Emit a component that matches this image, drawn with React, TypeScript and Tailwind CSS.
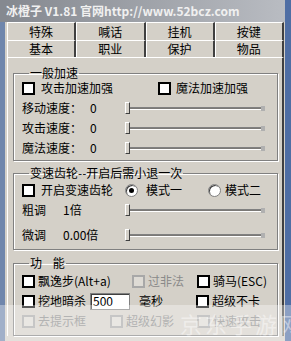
import React from "react";

const F = '"Noto Sans CJK SC", "Noto Sans", sans-serif';

function Box({ disabled = false }: { disabled?: boolean }) {
  return (
    <span
      className={
        "inline-block w-[13px] h-[13px] shrink-0 " +
        (disabled
          ? "border-2 border-[#a8a8a8] bg-[#dedbd5]"
          : "border-2 border-black bg-white")
      }
    />
  );
}

function Radio({ on = false }: { on?: boolean }) {
  return (
    <span className="relative inline-flex w-[13px] h-[13px] shrink-0 rounded-full bg-white border border-[#808080] shadow-[inset_1px_1px_0_#404040] items-center justify-center">
      {on && <span className="w-[5px] h-[5px] rounded-full bg-black" />}
    </span>
  );
}

function Slider() {
  return (
    <div className="relative w-[140px] h-[12px]">
      <div className="absolute left-0 right-0 top-[5px] h-[3px] border-t border-[#808080] border-b border-b-white bg-[#404040]/60" />
      <div className="absolute left-0 top-0 w-[5px] h-[12px] bg-[#d4d0c8] border-l border-t border-white border-r border-b border-r-[#404040] border-b-[#404040]" />
      <div className="absolute right-0 top-[4px] w-[4px] h-[5px] bg-[#b0b0b0]" />
    </div>
  );
}

function Tab({ label }: { label: string }) {
  return (
    <div className="flex-1 flex items-center justify-center border-t border-l border-t-white border-l-white border-r-2 border-r-[#404040] text-[12px] leading-none">
      {label}
    </div>
  );
}

function Group({ title, children, cls }: { title: string; children: React.ReactNode; cls: string }) {
  return (
    <fieldset className={"w-[265px] border border-[#808080] shadow-[1px_1px_0_#fff,inset_1px_1px_0_#fff] pl-[8px] pr-[4px] " + cls}>
      <legend className="ml-[7px] px-[1px] h-[16px] leading-[16px] text-[12px] whitespace-pre">{title}</legend>
      {children}
    </fieldset>
  );
}

export default function App() {
  return (
    <div className="relative w-[291px] h-[341px] overflow-hidden flex text-black bg-[#d4d0c8]" style={{ fontFamily: F }}>
      <div className="w-[5px] h-full flex flex-col">
        <div className="h-[22px] bg-[#858990]" />
        <div className="flex-1 bg-[#6f86ac]" />
      </div>
      <div className="w-[280px] h-full flex flex-col">
        <div className="h-[22px] bg-gradient-to-r from-[#858990] to-[#b9bcc2] flex items-center pl-[1px] text-[12px] font-bold text-[#f0f0f0] whitespace-nowrap">
          冰橙子 V1.81 官网http://www.52bcz.com
        </div>
        <div className="flex flex-col pl-[2px] w-[279px]">
          <div className="flex h-[18px]">
            <Tab label="特殊" />
            <Tab label="喊话" />
            <Tab label="挂机" />
            <Tab label="按键" />
          </div>
          <div className="flex h-[17px]">
            <Tab label="基本" />
            <Tab label="职业" />
            <Tab label="保护" />
            <Tab label="物品" />
          </div>
          <div className="flex-1 border-t border-l border-white border-r-2 border-r-[#404040] pl-[5px] pt-[7px] text-[12px] leading-none">
            <Group title="一般加速" cls="pb-[2px]">
              <div className="flex items-center h-[14px]">
                <Box />
                <span className="ml-[6px]">攻击加速加强</span>
                <span className="ml-[45px] flex"><Box /></span>
                <span className="ml-[5px]">魔法加速加强</span>
              </div>
              {["移动速度", "攻击速度", "魔法速度"].map((t, i) => (
                <div key={t} className={"flex items-center h-5 " + (i === 0 ? "mt-[3px]" : "")}>
                  <span className="w-[68px]">{t}：</span>
                  <span className="w-[35px]">0</span>
                  <Slider />
                </div>
              ))}
            </Group>
            <Group title="变速齿轮--开启后需小退一次" cls="mt-[4px] pb-[4px]">
              <div className="flex items-center h-[14px] mt-[2px]">
                <Box />
                <span className="ml-[6px] w-[84px]">开启变速齿轮</span>
                <Radio on />
                <span className="ml-[8px] w-[62px]">模式一</span>
                <Radio />
                <span className="ml-[4px]">模式二</span>
              </div>
              <div className="flex items-center h-5 mt-[3px]">
                <span className="w-[41px]">粗调</span>
                <span className="w-[62px]">1倍</span>
                <Slider />
              </div>
              <div className="flex items-center h-5 mt-[5px]">
                <span className="w-[41px]">微调</span>
                <span className="w-[62px]">0.00倍</span>
                <Slider />
              </div>
            </Group>
            <Group title={"功    能"} cls="mt-[5px] pb-[4px]">
              <div className="flex items-center h-[14px] mt-[3px]">
                <Box />
                <span className="ml-[3px] w-[94px]">飘逸步(Alt+a)</span>
                <Box disabled />
                <span className="ml-[3px] w-[49px] text-[#8a8a8a]">过非法</span>
                <Box />
                <span className="ml-[3px]">骑马(ESC)</span>
              </div>
              <div className="flex items-center h-5 mt-[3px]">
                <Box />
                <span className="ml-[3px] w-[52px]">挖地暗杀</span>
                <span className="w-[40px] h-[17px] bg-white border border-[#808080] shadow-[inset_1px_1px_0_#404040] flex items-center pl-[2px]">500</span>
                <span className="ml-[9px] w-[57px]">毫秒</span>
                <Box />
                <span className="ml-[3px]">超级不卡</span>
              </div>
              <div className="flex items-center h-5 text-[#8a8a8a]">
                <Box disabled />
                <span className="ml-[3px] w-[72px]">去提示框</span>
                <Box disabled />
                <span className="ml-[3px] w-[71px]">超级幻影</span>
                <Box disabled />
                <span className="ml-[3px]">快速攻击</span>
              </div>
            </Group>
          </div>
        </div>
      </div>
      <div className="w-[6px] h-full bg-[#4f6ea4]" />
      <div className="absolute left-0 right-0 top-[305px] bottom-0 bg-white/35 pointer-events-none" />
      <div className="absolute left-[180px] top-[310px] text-[22px] leading-[26px] text-white/45 tracking-[3px] whitespace-nowrap pointer-events-none">
        京东手游网
      </div>
    </div>
  );
}
